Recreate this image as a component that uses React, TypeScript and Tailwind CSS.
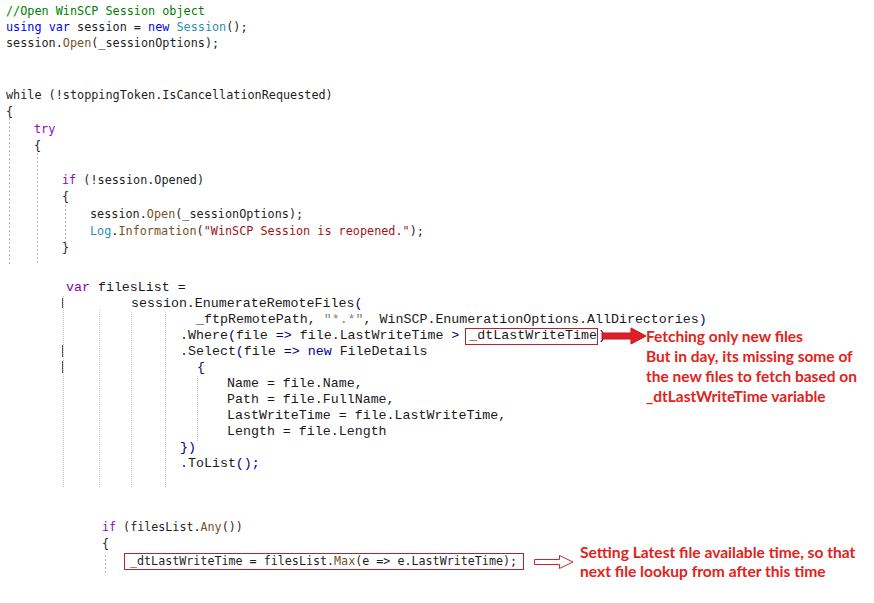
import React from "react";

const KW = "text-[#0000ff]";
const CTRL = "text-[#8f08c4]";
const TYPE = "text-[#2b91af]";
const METH = "text-[#74531f]";
const STR = "text-[#a31515]";
const CMT = "text-[#008000]";
const NAVY = "text-[#000080]";
const RED = "#e2231a";

function L({ h, pl, children }: { h: string; pl: string; children?: React.ReactNode }) {
  return (
    <div className={`${h} ${pl} flex items-center whitespace-pre`}>
      <span>{children}</span>
    </div>
  );
}

function FilledArrow() {
  return (
    <svg width="46" height="18" viewBox="0 0 46 18" className="shrink-0">
      <path d="M1 6 H30 V1 L45 9 L30 17 V12 H1 Z" fill="#e01f26" stroke="#c0161c" strokeWidth="1" />
    </svg>
  );
}

function OutlineArrow() {
  return (
    <svg width="40" height="16" viewBox="0 0 40 16" className="shrink-0">
      <path d="M0.5 5.5 H25.5 V1.5 L39 8 L25.5 14.5 V10.5 H0.5 Z" fill="white" stroke="#c8262c" strokeWidth="1" />
    </svg>
  );
}

function Guide({ x, y1, y2, dotted }: { x: number; y1: number; y2: number; dotted?: boolean }) {
  return (
    <div
      className={`absolute w-px ${
        dotted
          ? "bg-[repeating-linear-gradient(to_bottom,#c4c4c4_0_1px,transparent_1px_2px)]"
          : "bg-[repeating-linear-gradient(to_bottom,#b8b8b8_0_2px,transparent_2px_4px)]"
      }`}
      style={{ left: x, top: y1, height: y2 - y1 }}
    />
  );
}

export default function App() {
  return (
    <div className="relative w-[874px] h-[603px] bg-white overflow-hidden">
      {/* Top block */}
      <div className="pt-1 font-['DejaVu_Sans_Mono',monospace] text-[11.8px] text-[#1e1e1e]">
        <L h="h-4" pl="pl-[6px]">
          <span className={CMT}>//Open WinSCP Session object</span>
        </L>
        <L h="h-4" pl="pl-[6px]">
          <span className={KW}>using</span> <span className={KW}>var</span> session = <span className={KW}>new</span>{" "}
          <span className={TYPE}>Session</span>();
        </L>
        <L h="h-4" pl="pl-[6px]">
          session.<span className={METH}>Open</span>(_sessionOptions);
        </L>
      </div>

      <div className="mt-[35px] font-['DejaVu_Sans_Mono',monospace] text-[11.8px] text-[#1e1e1e]">
        <L h="h-[17px]" pl="pl-[6px]">while (!stoppingToken.IsCancellationRequested)</L>
        <L h="h-[17px]" pl="pl-[6px]">{"{"}</L>
        <L h="h-[17px]" pl="pl-[34px]">
          <span className={CTRL}>try</span>
        </L>
        <L h="h-[17px]" pl="pl-[34px]">{"{"}</L>
        <L h="h-[17px]" pl="pl-[34px]"></L>
        <L h="h-[17px]" pl="pl-[62px]">
          <span className={CTRL}>if</span> (!session.Opened)
        </L>
        <L h="h-[17px]" pl="pl-[62px]">{"{"}</L>
        <L h="h-[17px]" pl="pl-[90px]">
          session.<span className={METH}>Open</span>(_sessionOptions);
        </L>
        <L h="h-[17px]" pl="pl-[90px]">
          <span className={TYPE}>Log</span>.<span className={METH}>Information</span>(
          <span className={STR}>"WinSCP Session is reopened."</span>);
        </L>
        <L h="h-[17px]" pl="pl-[62px]">{"}"}</L>
      </div>

      {/* Middle block (Courier-style) */}
      <div className="mt-[23px] font-['Liberation_Mono',monospace] text-[13.3px] text-[#1a1a1a]">
        <L h="h-4" pl="pl-[66px]">
          <span className="text-[#8000c0]">var</span> filesList =
        </L>
        <L h="h-4" pl="pl-[131px]">
          session.EnumerateRemoteFiles<span className={NAVY}>(</span>
        </L>
        <L h="h-4" pl="pl-[196px]">
          _ftpRemotePath, <span className="text-[#808080]">"*.*"</span>, WinSCP.EnumerationOptions.AllDirectories
          <span className={NAVY}>)</span>
        </L>
        <div className="h-4 pl-[180px] flex items-start whitespace-pre">
          <span className="h-4 flex items-center">
            <span>
              .Where<span className={NAVY}>(</span>file <span className={NAVY}>{"=>"}</span> file.LastWriteTime{" "}
              <span className={NAVY}>{">"}</span>{" "}
            </span>
            <span className="inline-flex items-center h-[17px] pl-[3px] pr-0 -ml-[2px] border border-[#b5242c]">
              _dtLastWriteTime
            </span>
            <span className={NAVY}>)</span>
          </span>
          <span className="h-4 flex items-center -ml-[5px]">
            <FilledArrow />
          </span>
          <div
            className="-mt-[2px] -ml-px font-['Lato',sans-serif] font-bold text-[15.5px] leading-[20px] whitespace-nowrap"
            style={{ color: RED }}
          >
            <div>Fetching only new files</div>
            <div>But in day, its missing some of</div>
            <div>the new files to fetch based on</div>
            <div>_dtLastWriteTime variable</div>
          </div>
        </div>
        <L h="h-4" pl="pl-[180px]">
          .Select<span className={NAVY}>(</span>file <span className={NAVY}>{"=>"}</span>{" "}
          <span className="text-[#0000a0]">new</span> FileDetails
        </L>
        <L h="h-4" pl="pl-[197px]">
          <span className={NAVY}>{"{"}</span>
        </L>
        <L h="h-4" pl="pl-[227px]">Name = file.Name,</L>
        <L h="h-4" pl="pl-[227px]">Path = file.FullName,</L>
        <L h="h-4" pl="pl-[227px]">LastWriteTime = file.LastWriteTime,</L>
        <L h="h-4" pl="pl-[227px]">Length = file.Length</L>
        <L h="h-4" pl="pl-[180px]">
          <span className={NAVY}>{"})"}</span>
        </L>
        <L h="h-4" pl="pl-[180px]">
          .ToList<span className={NAVY}>();</span>
        </L>
      </div>

      {/* Bottom block */}
      <div className="mt-[47px] font-['DejaVu_Sans_Mono',monospace] text-[11.7px] text-[#1e1e1e]">
        <L h="h-[17px]" pl="pl-[102px]">
          <span className={CTRL}>if</span> (filesList.<span className={METH}>Any</span>())
        </L>
        <L h="h-[17px]" pl="pl-[102px]">{"{"}</L>
        <div className="h-[17px] pl-[124px] flex items-start whitespace-pre">
          <span className="h-[17px] flex items-center pl-[5px] pr-[6px] border border-[#b5242c]">
            <span>
              _dtLastWriteTime = filesList.<span className={METH}>Max</span>(e =&gt; e.LastWriteTime);
            </span>
          </span>
          <span className="h-[17px] flex items-center ml-[10px]">
            <OutlineArrow />
          </span>
          <div
            className="ml-[6px] -mt-[10px] font-['Lato',sans-serif] font-bold text-[15.6px] leading-[19px] whitespace-nowrap"
            style={{ color: RED }}
          >
            <div>Setting Latest file available time, so that</div>
            <div>next file lookup from after this time</div>
          </div>
        </div>
      </div>

      {/* Indent guides */}
      <Guide x={9} y1={118} y2={264} />
      <Guide x={37} y1={153} y2={264} />
      <Guide x={65} y1={205} y2={242} />

      <Guide x={63} y1={296} y2={488} dotted />
      <div className="absolute left-[62px] top-[298px] w-px h-[10px] bg-[#555]" />
      <div className="absolute left-[62px] top-[345px] w-px h-[12px] bg-[#555]" />
      <div className="absolute left-[62px] top-[361px] w-px h-[12px] bg-[#555]" />
      <Guide x={99} y1={310} y2={488} dotted />
      <Guide x={131} y1={312} y2={488} dotted />
      <Guide x={165} y1={312} y2={488} dotted />
      <Guide x={197} y1={376} y2={442} dotted />

      <Guide x={105} y1={555} y2={573} />
    </div>
  );
}
